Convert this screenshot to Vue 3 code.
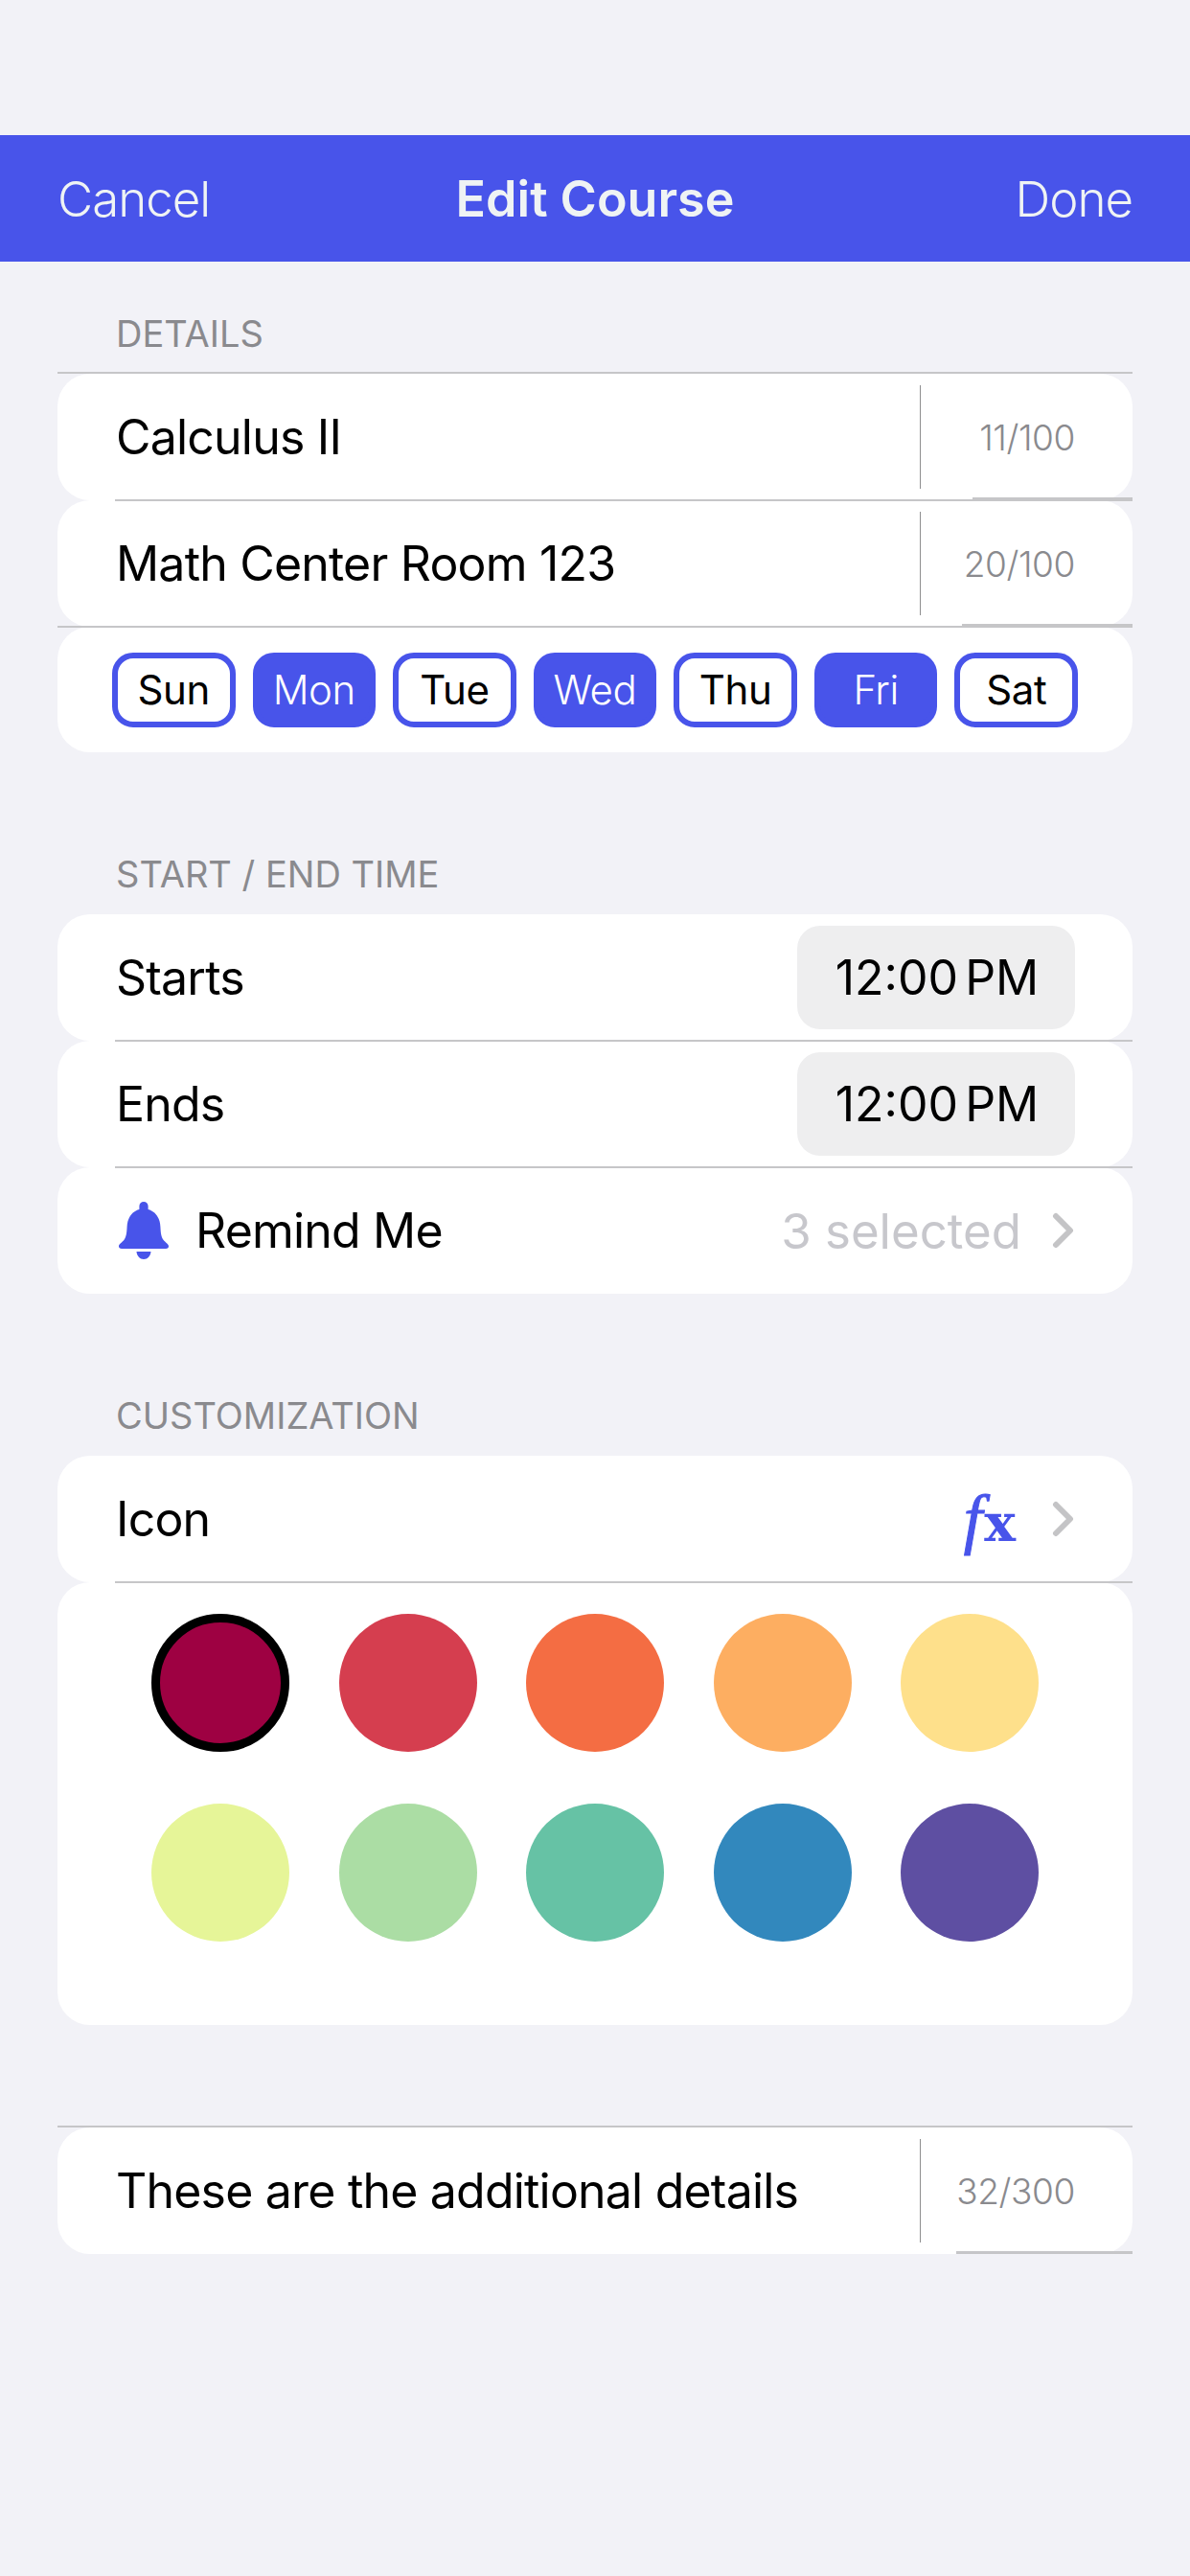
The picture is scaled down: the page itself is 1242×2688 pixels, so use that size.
<template>
  <div class="page">
    <header class="navbar">
      <span class="nav-btn">Cancel</span>
      <span class="nav-title">Edit Course</span>
      <span class="nav-btn right">Done</span>
    </header>

    <section class="section first">
      <h3 class="section-label">DETAILS</h3>
      <div class="top-line"></div>
      <div class="row">
        <span class="row-text">Calculus II</span>
        <div class="counter-box"><span class="counter">11/100</span></div>
        <i class="sep"></i>
        <i class="sep-end" style="width: 167px"></i>
      </div>
      <div class="row">
        <span class="row-text">Math Center Room 123</span>
        <div class="counter-box"><span class="counter">20/100</span></div>
        <i class="sep full"></i>
        <i class="sep-end" style="width: 178px"></i>
      </div>
      <div class="row days">
        <span
          v-for="day in days"
          :key="day.name"
          class="day"
          :class="{ on: day.on }"
        >{{ day.name }}</span>
      </div>
    </section>

    <section class="section">
      <h3 class="section-label">START / END TIME</h3>
      <div class="row">
        <span class="row-text">Starts</span>
        <span class="time-pill">12:00 PM</span>
        <i class="sep"></i>
      </div>
      <div class="row">
        <span class="row-text">Ends</span>
        <span class="time-pill">12:00 PM</span>
        <i class="sep"></i>
      </div>
      <div class="row">
        <svg class="bell" width="54" height="60" viewBox="0 0 54 60">
          <path
            fill="#4854ea"
            d="M27 0c2.600 0 4.600 2 4.600 4.600V8C39 10 44 16.500 44.400 26C44.800 34 45.500 37 47.500 39.800C49.500 42.500 53 44 53 46.500C53 48 52 49 50 49H4C2 49 1 48 1 46.500C1 44 4.500 42.500 6.500 39.800C8.500 37 9.200 34 9.600 26C10 16.500 15 10 22.400 8V4.600C22.400 2 24.400 0 27 0Z"
          />
          <path fill="#4854ea" d="M19.500 52h15c-.4 4.500-3.500 8-7.500 8s-7.100-3.500-7.500-8z" />
        </svg>
        <span class="row-text remind">Remind Me</span>
        <span class="muted">3 selected</span>
        <svg class="chevron" width="24" height="38" viewBox="0 0 24 38">
          <path d="M4 4l15 15L4 34" fill="none" stroke="#c4c4c6" stroke-width="6" stroke-linecap="round" stroke-linejoin="round" />
        </svg>
      </div>
    </section>

    <section class="section">
      <h3 class="section-label">CUSTOMIZATION</h3>
      <div class="row">
        <span class="row-text">Icon</span>
        <span class="fx"><em>f</em>x</span>
        <svg class="chevron fx-chevron" width="24" height="38" viewBox="0 0 24 38">
          <path d="M4 4l15 15L4 34" fill="none" stroke="#c4c4c6" stroke-width="6" stroke-linecap="round" stroke-linejoin="round" />
        </svg>
        <i class="sep"></i>
      </div>
      <div class="swatches">
        <span
          v-for="(color, i) in colors"
          :key="color"
          class="swatch"
          :class="{ picked: i === 0 }"
          :style="{ background: color }"
        ></span>
      </div>
    </section>

    <section class="section notes">
      <div class="top-line"></div>
      <div class="row">
        <span class="row-text">These are the additional details</span>
        <div class="counter-box"><span class="counter">32/300</span></div>
        <i class="sep-end" style="width: 184px"></i>
      </div>
    </section>
  </div>
</template>

<script setup>
const days = [
  { name: "Sun", on: false },
  { name: "Mon", on: true },
  { name: "Tue", on: false },
  { name: "Wed", on: true },
  { name: "Thu", on: false },
  { name: "Fri", on: true },
  { name: "Sat", on: false },
];

const colors = [
  "#9e0142",
  "#d53e4f",
  "#f46d43",
  "#fdae61",
  "#fee08b",
  "#e6f598",
  "#abdda4",
  "#66c2a5",
  "#3288bd",
  "#5e4fa2",
];
</script>

<style>
html,
body {
  margin: 0;
  background: #f2f2f7;
}
</style>

<style scoped>
.page {
  width: 1242px;
  height: 2688px;
  padding-top: 141px;
  box-sizing: border-box;
  background: #f2f2f7;
  font-family: Inter, "Noto Sans", sans-serif;
  color: #000;
  overflow: hidden;
}

.navbar {
  height: 132px;
  padding: 0 60px;
  background: #4854ea;
  color: #eff3f4;
  display: grid;
  grid-template-columns: 1fr auto 1fr;
  align-items: center;
}

.nav-btn {
  font-size: 51px;
  font-weight: 300;
  letter-spacing: -1px;
}

.nav-btn.right {
  text-align: right;
}

.nav-title {
  font-size: 52px;
  font-weight: 600;
}

.section {
  margin: 105px 60px 0;
  position: relative;
}

.section.first {
  margin-top: 53px;
}

.section.notes {
  margin-top: 107px;
}

.section-label {
  margin: 0 0 20px;
  padding-left: 61px;
  font-size: 38px;
  line-height: 44px;
  font-weight: 400;
  color: #8a8a8e;
}

.top-line {
  height: 2px;
  margin-top: -2px;
  background: #c6c6c8;
  position: relative;
  z-index: 1;
}

.row {
  position: relative;
  height: 132px;
  box-sizing: border-box;
  padding: 0 60px 0 61px;
  background: #fff;
  border-radius: 34px;
  display: flex;
  align-items: center;
}

.row-text {
  font-size: 50px;
  letter-spacing: -0.8px;
  flex: 1;
}

.remind {
  margin-left: 27px;
}

.counter-box {
  height: 108px;
  width: 222px;
  margin-right: -60px;
  padding-right: 60px;
  box-sizing: border-box;
  border-left: 1px solid #8e8e90;
  display: flex;
  align-items: center;
  justify-content: flex-end;
}

.counter {
  font-size: 37px;
  font-weight: 300;
  letter-spacing: -0.4px;
  color: #8a8a8e;
}

.sep {
  position: absolute;
  left: 60px;
  right: 0;
  bottom: -1px;
  height: 2px;
  background: #c6c6c8;
  z-index: 1;
}

.sep.full {
  left: 0;
}

.sep-end {
  position: absolute;
  right: 0;
  bottom: 0;
  height: 3px;
  background: #c6c6c8;
  z-index: 1;
}

.days {
  height: 131px;
  gap: 18px;
  padding: 0;
  justify-content: center;
}

.day {
  width: 128.6px;
  height: 78px;
  box-sizing: border-box;
  border: 6px solid #4854ea;
  border-radius: 22px;
  font-size: 42px;
  letter-spacing: -0.4px;
  display: flex;
  align-items: center;
  justify-content: center;
}

.day.on {
  background: #4854ea;
  color: #fff;
  font-weight: 300;
}

.time-pill {
  width: 290px;
  height: 108px;
  border-radius: 24px;
  background: #eeeeef;
  font-size: 50px;
  word-spacing: -7px;
  padding-left: 2px;
  box-sizing: border-box;
  display: flex;
  align-items: center;
  justify-content: center;
}

.bell {
  margin-left: 2px;
}

.muted {
  font-size: 51px;
  font-weight: 400;
  color: #c7c7cc;
}

.chevron {
  margin-left: 32px;
}

.fx-chevron {
  margin-left: 38px;
}

.fx {
  font-family: "DejaVu Serif", "Liberation Serif", serif;
  font-size: 55px;
  font-weight: 700;
  line-height: 1;
  color: #4854ea;
  display: flex;
  align-items: baseline;
}

.fx em {
  font-family: "Liberation Serif", serif;
  font-size: 70px;
  font-weight: 400;
  margin-right: 2px;
  -webkit-text-stroke: 1px #4854ea;
}

.swatches {
  height: 462px;
  box-sizing: border-box;
  padding: 33px 98px 0;
  background: #fff;
  border-radius: 34px;
  display: grid;
  grid-template-columns: repeat(5, 144px);
  grid-auto-rows: 144px;
  justify-content: space-between;
  row-gap: 54px;
}

.swatch {
  width: 144px;
  height: 144px;
  box-sizing: border-box;
  border-radius: 50%;
}

.swatch.picked {
  border: 9px solid #000;
}
</style>
